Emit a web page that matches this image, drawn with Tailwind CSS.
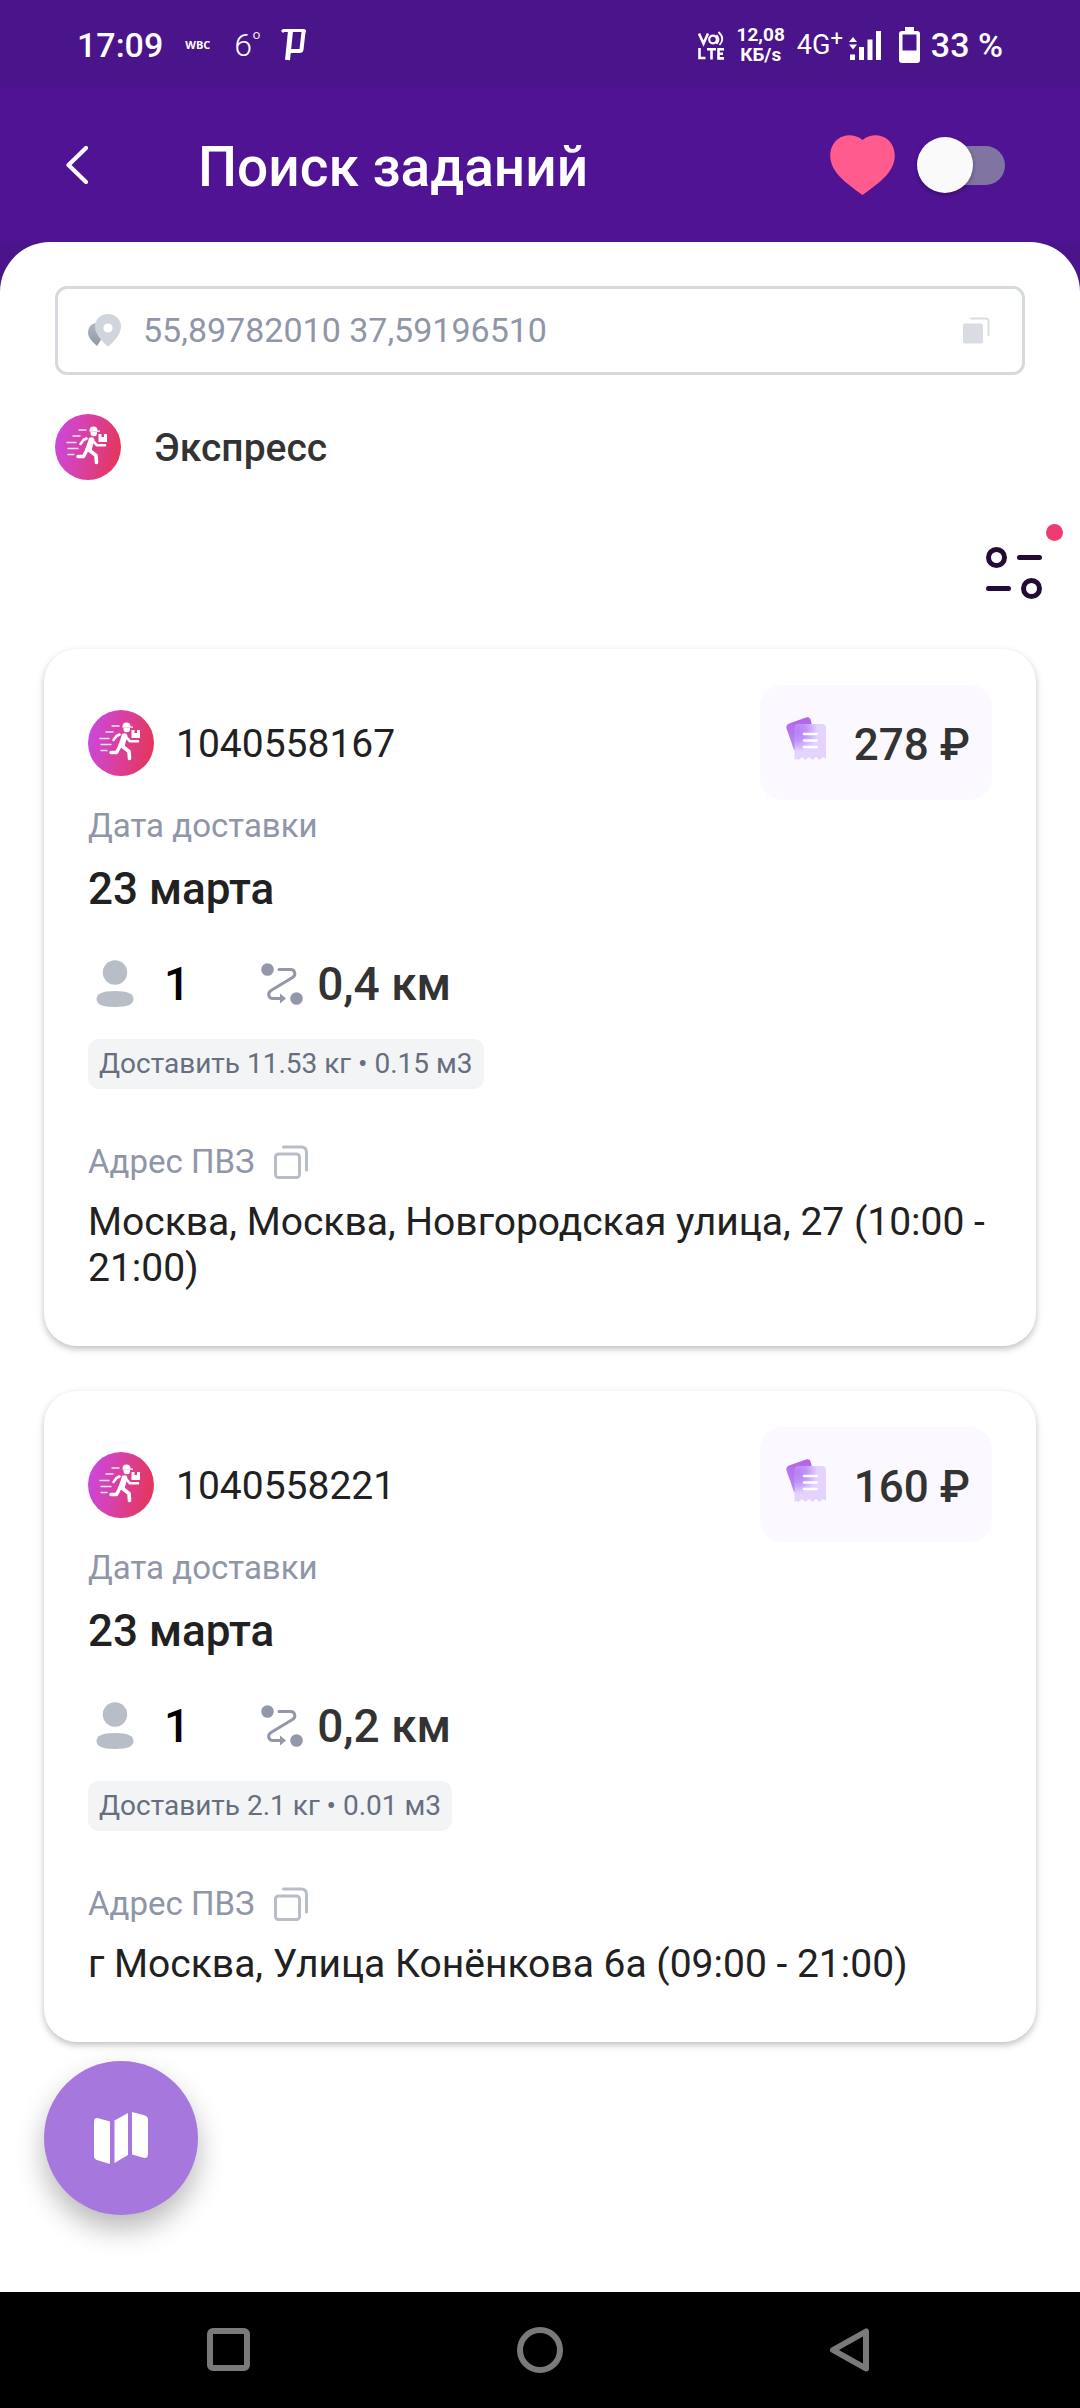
<!DOCTYPE html>
<html lang="ru">
  <head>
    <meta charset="UTF-8" />
    <meta name="viewport" content="width=device-width, initial-scale=1.0" />
    <script src="https://cdn.jsdelivr.net/npm/@tailwindcss/browser@4"></script>
    <title>Поиск заданий</title>
  </head>
  <body class="min-h-screen flex flex-col bg-[#4a148a] font-[Roboto,sans-serif] text-[#212121]">
    <!-- shared shapes -->
    <svg width="0" height="0" class="absolute" aria-hidden="true">
      <defs>
        <linearGradient id="express-bg" x1="0" y1="0.4" x2="1" y2="0.6">
          <stop offset="0" stop-color="#cb48dc" />
          <stop offset="0.5" stop-color="#da3f9c" />
          <stop offset="1" stop-color="#e4365a" />
        </linearGradient>
        <linearGradient id="ticket-back" x1="0.6" y1="0" x2="0.4" y2="1">
          <stop offset="0" stop-color="#b760e6" />
          <stop offset="1" stop-color="#b28bfa" />
        </linearGradient>
        <radialGradient id="ticket-front" gradientUnits="userSpaceOnUse" cx="11" cy="14" r="21">
          <stop offset="0" stop-color="#b880f5" />
          <stop offset="0.45" stop-color="#c092f8" />
          <stop offset="1" stop-color="#e4d4fd" />
        </radialGradient>
        <linearGradient id="pin-back" x1="0" y1="0" x2="0" y2="1">
          <stop offset="0" stop-color="#b3b8c4" />
          <stop offset="1" stop-color="#8f96a8" />
        </linearGradient>
        <symbol id="express" viewBox="0 0 66 66">
          <circle cx="33" cy="33" r="33" fill="url(#express-bg)" />
          <g stroke="#fff" stroke-width="1.400" stroke-linecap="round" opacity="0.85">
            <path d="M24 16h7M18 22h7M12 28.500h9M13 34.500h10M13 40.500h6" />
          </g>
          <path d="M34.500 16.500a4 4 0 0 1 8 0h2.500v1.300h-10.500z" fill="#fff" />
          <path d="M35.500 18h6.500v1a3.200 3.200 0 0 1-6.500 0z" fill="#fff" />
          <path d="M43.500 20h3v3h2.500v-3h3v8h-8.500z" fill="#fff" />
          <path d="M34 24q4-2 5.500 1.500l-3 11-6.500-.5 2.500-7z" fill="#fff" />
          <g fill="none" stroke="#fff" stroke-linecap="round" stroke-linejoin="round">
            <path d="M38 27l4 4.300h8" stroke-width="2.600" />
            <path d="M31.500 24.500l-3 1.500-3 4" stroke-width="2.600" />
            <path d="M32.500 35l-4 7.500h-5.500M34 36l7 5.500.5 7" stroke-width="3.600" />
          </g>
        </symbol>
        <symbol id="ticket" viewBox="0 0 40 44">
          <path d="M3 6.500L20 .5q3.500-1 4.500 2l7 25L8 33 .5 11.500q-1-3.500 2.500-5z" fill="url(#ticket-back)" />
          <path
            d="M11 7h25q4 0 4 4v31l-3-2-3.500 3-3.500-3-3.500 3-3.500-3-3.500 3-3.500-3-3.500 3-2-1-2 1V11q0-4 4-4z"
            fill="url(#ticket-front)"
          />
          <path d="M18 17h12.500M18 23.500h12.500M18 30h12.500" stroke="#fff" stroke-width="2.600" stroke-linecap="round" />
        </symbol>
        <symbol id="person" viewBox="0 0 38 48">
          <circle cx="19" cy="12.500" r="12.200" fill="#b7bec7" />
          <path d="M0.500 39c0-5 5-8 18.500-8s18.500 3 18.500 8-5 8-18.500 8S.5 44 .5 39z" fill="#b7bec7" />
        </symbol>
        <symbol id="route" viewBox="0 0 42 44">
          <circle cx="6.500" cy="7.500" r="6.300" fill="#9297aa" />
          <circle cx="35.500" cy="36.500" r="6.300" fill="#9297aa" />
          <g fill="none" stroke="#9297aa" stroke-width="3" stroke-linecap="round" stroke-linejoin="round">
            <path d="M18 7.500h11.500c4.500 0 6 5.500 2 8L10 28.500c-4 3-2.500 8 2 8h10" />
          </g>
          <path d="M19 31.500l6 5-6 5z" fill="#9297aa" />
        </symbol>
        <symbol id="copy" viewBox="0 0 34 34">
          <g fill="none" stroke="#b7bec7" stroke-width="3" stroke-linecap="round">
            <rect x="1.500" y="9" width="24" height="23.500" rx="3" />
            <path d="M9.500 2H27q5.500 0 5.500 5.500V25" />
          </g>
        </symbol>
      </defs>
    </svg>

    <!-- status bar -->
    <div class="h-[88px] pt-[2px] flex items-center justify-between pl-[77px] pr-[77px] text-white">
      <div class="flex items-center">
        <span class="text-[34px] font-medium">17:09</span>
        <span class="ml-[22px] font-['Open_Sans',sans-serif] text-[11px] font-bold">WBC</span>
        <span class="ml-6 flex items-start font-light text-[32px] leading-8">6<span class="text-[20px] leading-5">º</span></span>
        <svg class="ml-5 w-[25px] h-8" viewBox="0 0 25 32" fill="none" stroke="#fff">
          <path d="M1 3l1.500-1.500H22q2 0 2 2" stroke-width="3" />
          <path d="M9.500 2L6.500 31" stroke-width="5" />
          <path d="M22.500 3L20.500 20.500Q20.300 22 18.500 22H9" stroke-width="4" />
        </svg>
      </div>
      <div class="flex items-center">
        <svg class="w-[27px] h-[29px]" viewBox="0 0 27 29" fill="none" stroke="#fff">
          <path d="M1 2.500l4.500 10L10 2.500" stroke-width="2.600" />
          <circle cx="15" cy="8.500" r="3.800" stroke-width="2.200" />
          <path d="M18.500 4q4 4.500 0 9M20.500 1q7 6.500 1 13" stroke-width="1.800" />
          <path d="M1.500 17v10h6M9 18.200h9M13.500 18v10.500M26 18.200h-5.500v9.200H26M20.500 22.800H25" stroke-width="2.600" />
        </svg>
        <div class="ml-3 text-[19px] leading-5 font-bold text-center">
          <div>12,08</div>
          <div>КБ/s</div>
        </div>
        <span class="ml-3 flex items-start text-[27px] leading-8">4G<span class="text-[22px] leading-5">+</span></span>
        <svg class="ml-[6px] w-8 h-[29px]" viewBox="0 0 32 29" fill="#fff">
          <path d="M0 11l4-5 4 5zM0 13.500h8l-4 5zM1 23.500h5V29H1zM10 16h5v13h-5zM18.500 8.500h5V29h-5zM27 0h5v29h-5z" />
        </svg>
        <svg class="ml-[18px] w-[21px] h-9" viewBox="0 0 21 36">
          <path
            d="M6 0h9v4h3q3 0 3 3v26q0 3-3 3H3q-3 0-3-3V7q0-3 3-3h3zM3.500 7.500v16h14v-16z"
            fill="#fff"
            fill-rule="evenodd"
          />
        </svg>
        <span class="ml-[11px] text-[34px] font-medium">33 %</span>
      </div>
    </div>

    <header class="h-[154px] flex items-center pl-11 pr-[75px] bg-[#4f1394]">
      <button class="p-[22px]" aria-label="Назад">
        <svg class="w-[22px] h-[38px]" viewBox="0 0 22 38" fill="none" stroke="#fff" stroke-width="4.200" stroke-linecap="round" stroke-linejoin="round">
          <path d="M20 2L2.500 19 20 36" />
        </svg>
      </button>
      <h1 class="ml-[88px] pt-1 text-[55px] font-medium text-white">Поиск заданий</h1>
      <svg class="ml-auto w-[65px] h-[60px]" viewBox="0 0 65 60" fill="#ff5c8d">
        <path d="M32.500 5C25-1 15-1 8 4-1 11-2 24 4 34c5 9 15 16 28.500 26C46 50 56 43 61 34c6-10 5-23-4-30C50-1 40-1 32.500 5z" />
      </svg>
      <label class="ml-[22px] relative w-[88px] h-14 flex items-center justify-end">
        <input type="checkbox" class="peer sr-only" aria-label="Только избранные" />
        <span class="w-[70px] h-[39px] rounded-full bg-[#7f74a2]"></span>
        <span class="absolute left-0 top-0 size-14 rounded-full bg-[#fafafa] shadow-[0_2px_4px_rgba(0,0,0,0.3)] peer-checked:left-8"></span>
      </label>
    </header>

    <main class="flex-1 rounded-t-[50px] bg-white px-11 pt-11 pb-[77px]">
      <div class="mx-[11px] h-[89px] flex items-center pl-[30px] pr-8 border-3 border-[#d5dade] rounded-xl">
        <svg class="w-[33px] h-[33px] shrink-0" viewBox="0 0 33 33">
          <path d="M9 32C4 27.500 0 23.500 0 18.500 0 12 5 9 9 9l7 12z" fill="url(#pin-back)" />
          <path d="M20 0C28 0 33 6 33 12.500 33 20 27 26 21.500 31.500q-1.500 1.500-3 0C13 26 7 20 7 12.500 7 6 12 0 20 0z" fill="#d0d5dd" />
          <circle cx="20" cy="14" r="4.600" fill="#fff" />
        </svg>
        <input
          type="text"
          aria-label="Координаты"
          value="55,89782010 37,59196510"
          class="ml-[22px] flex-1 min-w-0 text-[34px] text-[#8f96a8] outline-none"
        />
        <button aria-label="Скопировать координаты">
          <svg class="w-[27px] h-[27px]" viewBox="0 0 27 27">
            <rect y="6.500" width="20" height="20" rx="2" fill="#d9dce3" />
            <path d="M8 1.500h14.500q3 0 3 3V18" fill="none" stroke="#d9dce3" stroke-width="1.800" stroke-linecap="round" />
          </svg>
        </button>
      </div>

      <div class="mx-[11px] mt-[39px] flex items-center">
        <svg class="size-[66px]"><use href="#express" /></svg>
        <span class="ml-[33px] pt-[2px] text-[39px] font-medium text-[#333]">Экспресс</span>
      </div>

      <div class="mt-11 -mr-[27px] flex justify-end">
        <button class="relative pr-[11px] pt-[23px]" aria-label="Фильтр">
          <svg class="mr-[10px] w-14 h-[52px]" viewBox="0 0 56 52" fill="none" stroke="#240b36" stroke-width="5">
            <circle cx="10.500" cy="10.500" r="8" />
            <circle cx="45.500" cy="41.500" r="8" />
            <path d="M33.500 10.500h20M2.500 41.500h20" stroke-linecap="round" />
          </svg>
          <span class="absolute right-0 top-0 size-[17px] rounded-full bg-[#ef3b72]"></span>
        </button>
      </div>

      <section class="mt-[50px] flex flex-col gap-[45px]">
        <!-- task -->
        <article class="rounded-[33px] bg-white px-11 pt-9 pb-[55px] shadow-[0_3px_7px_rgba(0,0,0,0.25)]">
          <div class="flex items-center">
            <svg class="size-[66px]"><use href="#express" /></svg>
            <span class="ml-[22px] pt-1 text-[39px]">1040558167</span>
            <div class="ml-auto h-[115px] flex items-center gap-7 rounded-[22px] bg-[#fbf9ff] pl-[26px] pr-[22px]">
              <svg class="w-10 h-11 -mt-2"><use href="#ticket" /></svg>
              <span class="pt-1 text-[44px] leading-[52px] font-medium text-[#333]">278 ₽</span>
            </div>
          </div>
          <p class="mt-[6px] text-[33px] leading-[39px] text-[#8f96a8]">Дата доставки</p>
          <p class="mt-[18px] text-[44px] leading-[52px] font-medium">23 марта</p>
          <div class="mt-[42px] flex items-center">
            <svg class="ml-2 w-[38px] h-12"><use href="#person" /></svg>
            <span class="ml-[30px] text-[46px] leading-[54px] font-medium text-black">1</span>
            <svg class="ml-[71px] w-[42px] h-11"><use href="#route" /></svg>
            <span class="ml-[14px] text-[46px] leading-[54px] font-medium text-[#333]">0,4 км</span>
          </div>
          <p class="mt-[28px] w-fit px-[11px] rounded-[11px] bg-[#f2f4f6] text-[28px] leading-[50px] text-[#666e80]">Доставить 11.53 кг • 0.15 м3</p>
          <div class="mt-[53px] flex items-center">
            <span class="text-[33px] leading-[39px] text-[#8f96a8]">Адрес ПВЗ</span>
            <button class="ml-[19px]" aria-label="Скопировать адрес">
              <svg class="size-[34px]"><use href="#copy" /></svg>
            </button>
          </div>
          <p class="mt-[18px] text-[39px] leading-[46px]">Москва, Москва, Новгородская улица, 27 (10:00 - 21:00)</p>
        </article>

        <!-- task -->
        <article class="rounded-[33px] bg-white px-11 pt-9 pb-[55px] shadow-[0_3px_7px_rgba(0,0,0,0.25)]">
          <div class="flex items-center">
            <svg class="size-[66px]"><use href="#express" /></svg>
            <span class="ml-[22px] pt-1 text-[39px]">1040558221</span>
            <div class="ml-auto h-[115px] flex items-center gap-7 rounded-[22px] bg-[#fbf9ff] pl-[26px] pr-[22px]">
              <svg class="w-10 h-11 -mt-2"><use href="#ticket" /></svg>
              <span class="pt-1 text-[44px] leading-[52px] font-medium text-[#333]">160 ₽</span>
            </div>
          </div>
          <p class="mt-[6px] text-[33px] leading-[39px] text-[#8f96a8]">Дата доставки</p>
          <p class="mt-[18px] text-[44px] leading-[52px] font-medium">23 марта</p>
          <div class="mt-[42px] flex items-center">
            <svg class="ml-2 w-[38px] h-12"><use href="#person" /></svg>
            <span class="ml-[30px] text-[46px] leading-[54px] font-medium text-black">1</span>
            <svg class="ml-[71px] w-[42px] h-11"><use href="#route" /></svg>
            <span class="ml-[14px] text-[46px] leading-[54px] font-medium text-[#333]">0,2 км</span>
          </div>
          <p class="mt-[28px] w-fit px-[11px] rounded-[11px] bg-[#f2f4f6] text-[28px] leading-[50px] text-[#666e80]">Доставить 2.1 кг • 0.01 м3</p>
          <div class="mt-[53px] flex items-center">
            <span class="text-[33px] leading-[39px] text-[#8f96a8]">Адрес ПВЗ</span>
            <button class="ml-[19px]" aria-label="Скопировать адрес">
              <svg class="size-[34px]"><use href="#copy" /></svg>
            </button>
          </div>
          <p class="mt-[18px] text-[39px] leading-[46px]">г Москва, Улица Конёнкова 6а (09:00 - 21:00)</p>
        </article>
      </section>

      <button
        class="mt-[19px] size-[154px] flex items-center justify-center rounded-full bg-[#a678de] shadow-[0_14px_28px_rgba(0,0,0,0.28)]"
        aria-label="Показать на карте"
      >
        <svg class="w-[54px] h-[52px]" viewBox="0 0 54 52" fill="#fff">
          <path d="M0 10q0-4.500 4.500-3.800L16 9.500V52L3 48q-3-1-3-4z" />
          <path d="M20.500 8.500L34 1v42L20.500 51z" />
          <path d="M38 0l13 3.500q3 1 3 4V42q0 4.500-4.500 3.800L38 42.500z" />
        </svg>
      </button>
    </main>

    <nav class="h-[116px] grid grid-cols-3 items-center justify-items-center bg-black px-[73px]">
      <button aria-label="Недавние">
        <svg class="size-[46px]" viewBox="0 0 46 46" fill="none" stroke="#7a7a7a" stroke-width="6">
          <rect x="4" y="4" width="37" height="37" rx="3" />
        </svg>
      </button>
      <button aria-label="Домой">
        <svg class="size-[46px]" viewBox="0 0 46 46" fill="none" stroke="#7a7a7a" stroke-width="6">
          <circle cx="23" cy="23" r="20" />
        </svg>
      </button>
      <button aria-label="Назад">
        <svg class="size-[46px]" viewBox="0 0 46 46" fill="none" stroke="#7a7a7a" stroke-width="6" stroke-linejoin="round">
          <path d="M38 4.500v37L5 23z" />
        </svg>
      </button>
    </nav>
  </body>
</html>
